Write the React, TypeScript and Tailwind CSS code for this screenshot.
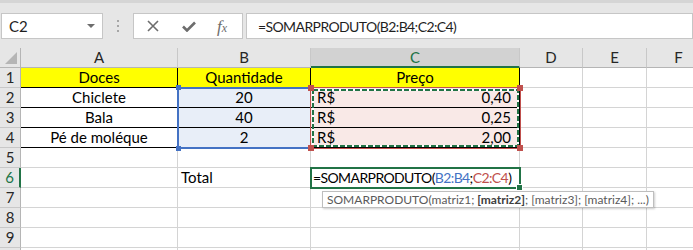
import React from 'react';

const GRID = 'border-r border-b border-[#d4d4d4]';

function HeaderCell({ label, active }: { label: string; active?: boolean }) {
  return (
    <div
      className={`flex items-center justify-center border-r border-[#c8c8c8] text-[15px] leading-none ${
        active
          ? 'bg-[#d2d2d2] text-[#217346] border-b-2 border-b-[#217346]'
          : 'bg-[#e6e6e6] text-[#262626] border-b border-b-[#b5b5b5]'
      }`}
    >
      {label}
    </div>
  );
}

function RowHeader({ n, active }: { n: number | null; active?: boolean }) {
  return (
    <div
      className={`flex items-center justify-center bg-[#e6e6e6] border-b border-[#c8c8c8] text-[15px] leading-none ${
        active ? 'text-[#217346] border-r-2 border-r-[#217346]' : 'text-[#262626] border-r border-r-[#b5b5b5]'
      }`}
    >
      {n}
    </div>
  );
}

const items = [
  { name: 'Chiclete', qty: '20', price: '0,40' },
  { name: 'Bala', qty: '40', price: '0,25' },
  { name: 'Pé de moléque', qty: '2', price: '2,00' },
];

export default function App() {
  return (
    <div className="w-[693px] h-[250px] overflow-hidden bg-[#e6e6e6] font-['Lato','Liberation_Sans',sans-serif] text-black">
      <div className="h-[3px] bg-[#d5d5d5]" />
      {/* formula bar */}
      <div className="flex items-start pt-[10px] h-[45px]">
        <div className="ml-[1px] w-[102px] h-[26px] bg-white border border-[#c6c6c6] flex items-center justify-between pl-[7px] pr-[7px]">
          <span className="text-[15px] text-[#1f1f1f]">C2</span>
          <span className="w-0 h-0 border-l-[4px] border-r-[4px] border-t-[4px] border-l-transparent border-r-transparent border-t-[#6d6d6d]" />
        </div>
        <div className="w-[30px] h-[26px] flex flex-col items-center justify-center gap-[3px]">
          <span className="w-[2px] h-[2px] bg-[#a6a6a6]" />
          <span className="w-[2px] h-[2px] bg-[#a6a6a6]" />
          <span className="w-[2px] h-[2px] bg-[#a6a6a6]" />
        </div>
        <div className="w-[110px] h-[26px] bg-white border border-[#c6c6c6] flex items-center">
          <svg className="ml-[13px]" width="12" height="12" viewBox="0 0 12 12">
            <path d="M1 1 L11 11 M11 1 L1 11" stroke="#6d6d6d" strokeWidth="1.6" />
          </svg>
          <svg className="ml-[23px]" width="14" height="11" viewBox="0 0 14 11">
            <path d="M1 5.5 L5 9.5 L13 1.5" stroke="#6d6d6d" strokeWidth="2.6" fill="none" />
          </svg>
          <span className="ml-[21px] font-['Liberation_Serif',serif] italic text-[17px] text-[#6d6d6d] leading-none">
            f<span className="text-[12px]">x</span>
          </span>
        </div>
        <div className="ml-[3px] flex-1 h-[26px] bg-white border border-[#c6c6c6] flex items-center pl-[11px] text-[14px] tracking-[-0.6px] text-[#1f1f1f]">
          =SOMARPRODUTO(B2:B4;C2:C4)
        </div>
      </div>

      {/* sheet */}
      <div className="relative grid grid-cols-[21px_157px_133px_209px_63px_64px_64px] grid-rows-[20px_repeat(10,20px)] bg-white">
        {/* corner */}
        <div className="bg-[#e6e6e6] border-r border-b border-[#b5b5b5] flex items-end justify-end pr-[3px] pb-[3px]">
          <svg width="12" height="12" viewBox="0 0 12 12">
            <path d="M12 0 L12 12 L0 12 Z" fill="#b5b5b5" />
          </svg>
        </div>
        {['A', 'B', 'C', 'D', 'E', 'F'].map((c) => (
          <HeaderCell key={c} label={c} active={c === 'C'} />
        ))}

        {/* row 1 */}
        <RowHeader n={1} />
        <div className="bg-[#ffff00] border-r border-b border-black flex items-center justify-center text-[15px]">Doces</div>
        <div className="bg-[#ffff00] border-r border-b border-black flex items-center justify-center text-[15px]">Quantidade</div>
        <div className="bg-[#ffff00] border-r border-b border-black flex items-center justify-center text-[15px]">Preço</div>
        <div className={GRID} />
        <div className={GRID} />
        <div className={GRID} />

        {/* rows 2-4 */}
        {items.map((it, i) => (
          <React.Fragment key={it.name}>
            <RowHeader n={i + 2} />
            <div className="border-r border-b border-black flex items-center justify-center text-[15px]">{it.name}</div>
            <div className="bg-[#e8eef8] border-r border-b border-black flex items-center justify-center text-[15px]">{it.qty}</div>
            <div className="bg-[#f9e9e7] border-r border-b border-black flex items-center justify-between pl-[6px] pr-[8px] text-[15px]">
              <span>R$</span>
              <span>{it.price}</span>
            </div>
            <div className={GRID} />
            <div className={GRID} />
            <div className={GRID} />
          </React.Fragment>
        ))}

        {/* rows 5-10 */}
        {[5, 6, 7, 8, 9, 10].map((n) => (
          <React.Fragment key={n}>
            <RowHeader n={n < 10 ? n : null} active={n === 6} />
            <div className={GRID} />
            <div className={`${GRID} flex items-center pl-[3px] text-[15px]`}>{n === 6 ? 'Total' : ''}</div>
            <div className={`${GRID} flex items-center pl-[2px] text-[14px] tracking-[-0.6px] whitespace-nowrap`}>
              {n === 6 && (
                <>
                  =SOMARPRODUTO(<span className="text-[#4472c4]">B2:B4</span>;<span className="text-[#c0504d]">C2:C4</span>)
                </>
              )}
            </div>
            <div className={GRID} />
            <div className={GRID} />
            <div className={GRID} />
          </React.Fragment>
        ))}

        {/* B2:B4 reference outline */}
        <div className="absolute left-[177px] top-[39px] w-[135px] h-[62px] border-2 border-[#4472c4] border-r-0" />
        <div className="absolute left-[176px] top-[37px] w-[5px] h-[5px] bg-[#4472c4]" />
        <div className="absolute left-[176px] top-[98px] w-[5px] h-[5px] bg-[#4472c4]" />

        {/* C2:C4 reference outline + marching ants */}
        <div className="absolute left-[310px] top-[39px] w-[211px] h-[62px] border border-[#c0504d]" />
        <svg className="absolute left-[312px] top-[41px]" width="207" height="58" viewBox="0 0 207 58">
          <rect x="1" y="1" width="205" height="56" fill="none" stroke="#ffffff" strokeWidth="2" />
          <rect x="1" y="1" width="205" height="56" fill="none" stroke="#217346" strokeWidth="2" strokeDasharray="5 2" />
        </svg>
        <div className="absolute left-[308px] top-[37px] w-[6px] h-[6px] bg-[#c0504d]" />
        <div className="absolute left-[517px] top-[37px] w-[6px] h-[6px] bg-[#c0504d]" />
        <div className="absolute left-[308px] top-[97px] w-[6px] h-[6px] bg-[#c0504d]" />
        <div className="absolute left-[517px] top-[97px] w-[6px] h-[6px] bg-[#c0504d]" />

        {/* active cell C6 */}
        <div className="absolute left-[310px] top-[119px] w-[211px] h-[22px] border-2 border-[#217346]" />
        <div className="absolute left-[516px] top-[136px] w-[7px] h-[7px] bg-[#217346] border border-white" />

        {/* function tooltip */}
        <div className="absolute left-[322px] top-[143px] w-[332px] h-[17px] bg-white border border-[#bebebe] shadow-[1px_1px_2px_rgba(0,0,0,0.2)] flex items-center pl-[4px] text-[12px] text-[#5a5a5a] whitespace-nowrap leading-none">
          SOMARPRODUTO(matriz1; <b className="text-[#404040] ml-[3px]">[matriz2]</b>; [matriz3]; [matriz4]; ...)
        </div>
      </div>
    </div>
  );
}
